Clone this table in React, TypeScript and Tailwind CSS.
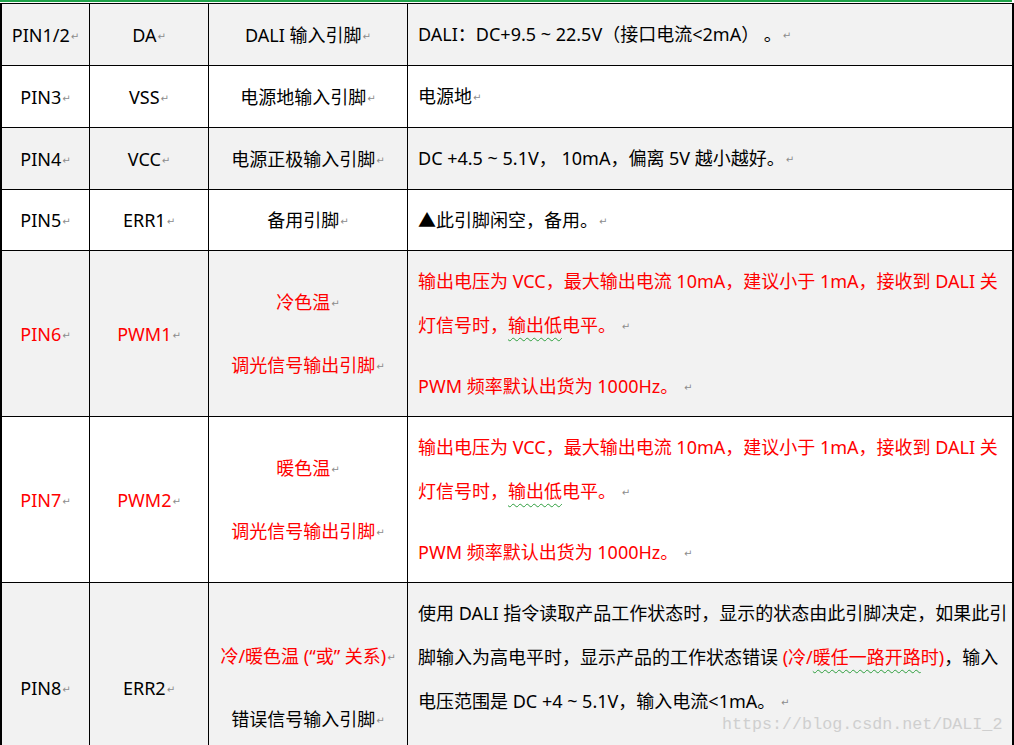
import React from "react";

const Mark = () => (
  <span className="ml-[1px] inline-block align-middle font-['DejaVu_Sans',sans-serif] text-[10px] leading-none text-[#8c8c8c]">↵</span>
);

const Wavy = ({ children }: { children: React.ReactNode }) => (
  <span className="underline decoration-wavy decoration-[#2e9e3e] decoration-[1px] underline-offset-[5px]">{children}</span>
);

type RowProps = {
  bg: string;
  h: string;
  red?: boolean;
  c1: React.ReactNode;
  c2: React.ReactNode;
  c3: React.ReactNode;
  c4: React.ReactNode;
};

const Row = ({ bg, h, red, c1, c2, c3, c4 }: RowProps) => (
  <div className={`flex border-b border-black ${bg} ${h} ${red ? "text-[#ff0000]" : "text-black"}`}>
    <div className="flex w-[88px] shrink-0 items-center justify-center border-r border-black">{c1}</div>
    <div className="flex w-[119px] shrink-0 items-center justify-center border-r border-black">{c2}</div>
    <div className="flex w-[199px] shrink-0 flex-col items-center justify-center gap-[19px] border-r border-black">{c3}</div>
    <div className="min-w-0 flex-1 pl-[10px] pt-[8px]">{c4}</div>
  </div>
);

export default function App() {
  return (
    <div className="relative h-[745px] w-[1014px] overflow-hidden bg-white font-['Noto_Sans','Noto_Sans_CJK_SC',sans-serif] text-[18px] leading-[44px]">
      <div className="h-[2px] w-[1012px] bg-[#1fa34a]" />
      <div className="h-px" />
      <div className="border-l-2 border-r-2 border-t border-black">
        <Row
          bg="bg-[#f2f2f2]"
          h="h-[62px]"
          c1={<span>PIN1/2<Mark /></span>}
          c2={<span>DA<Mark /></span>}
          c3={<span>DALI 输入引脚<Mark /></span>}
          c4={<p className="whitespace-nowrap">DALI：DC+9.5 ~ 22.5V（接口电流&lt;2mA） 。<Mark /></p>}
        />
        <Row
          bg="bg-white"
          h="h-[62px]"
          c1={<span>PIN3<Mark /></span>}
          c2={<span>VSS<Mark /></span>}
          c3={<span>电源地输入引脚<Mark /></span>}
          c4={<p>电源地<Mark /></p>}
        />
        <Row
          bg="bg-[#f2f2f2]"
          h="h-[62px]"
          c1={<span>PIN4<Mark /></span>}
          c2={<span>VCC<Mark /></span>}
          c3={<span>电源正极输入引脚<Mark /></span>}
          c4={<p className="whitespace-nowrap">DC +4.5 ~ 5.1V，  10mA，偏离 5V 越小越好。<Mark /></p>}
        />
        <Row
          bg="bg-white"
          h="h-[61px]"
          c1={<span>PIN5<Mark /></span>}
          c2={<span>ERR1<Mark /></span>}
          c3={<span>备用引脚<Mark /></span>}
          c4={<p>▲此引脚闲空，备用。<Mark /></p>}
        />
        <Row
          bg="bg-[#f2f2f2]"
          h="h-[166px]"
          red
          c1={<span>PIN6<Mark /></span>}
          c2={<span>PWM1<Mark /></span>}
          c3={
            <>
              <span>冷色温<Mark /></span>
              <span>调光信号输出引脚<Mark /></span>
            </>
          }
          c4={
            <div className="flex flex-col gap-[17px] whitespace-nowrap">
              <p>
                输出电压为 VCC，最大输出电流 10mA，建议小于 1mA，接收到 DALI 关<br />
                灯信号时，<Wavy>输出低</Wavy>电平。 <Mark />
              </p>
              <p>PWM 频率默认出货为 1000Hz。 <Mark /></p>
            </div>
          }
        />
        <Row
          bg="bg-white"
          h="h-[166px]"
          red
          c1={<span>PIN7<Mark /></span>}
          c2={<span>PWM2<Mark /></span>}
          c3={
            <>
              <span>暖色温<Mark /></span>
              <span>调光信号输出引脚<Mark /></span>
            </>
          }
          c4={
            <div className="flex flex-col gap-[17px] whitespace-nowrap">
              <p>
                输出电压为 VCC，最大输出电流 10mA，建议小于 1mA，接收到 DALI 关<br />
                灯信号时，<Wavy>输出低</Wavy>电平。 <Mark />
              </p>
              <p>PWM 频率默认出货为 1000Hz。 <Mark /></p>
            </div>
          }
        />
        <Row
          bg="bg-[#f2f2f2]"
          h="h-[210px]"
          c1={<span>PIN8<Mark /></span>}
          c2={<span>ERR2<Mark /></span>}
          c3={
            <>
              <span className="text-[#ff0000]">冷/暖色温 (“或” 关系)<Mark /></span>
              <span>错误信号输入引脚<Mark /></span>
            </>
          }
          c4={
            <p className="whitespace-nowrap">
              使用 DALI 指令读取产品工作状态时，显示的状态由此引脚决定，如果此引<br />
              脚输入为高电平时，显示产品的工作状态错误 <span className="text-[#ff0000]">(冷/<Wavy>暖任一路开路</Wavy>时)</span>，输入<br />
              电压范围是 DC +4 ~ 5.1V，输入电流&lt;1mA。 <Mark />
            </p>
          }
        />
      </div>
      <div className="absolute left-[722px] top-[712px] font-['Liberation_Mono',monospace] text-[16.7px] leading-[26px] text-[#cfcfcf]">
        https://blog.csdn.net/DALI_2
      </div>
    </div>
  );
}
